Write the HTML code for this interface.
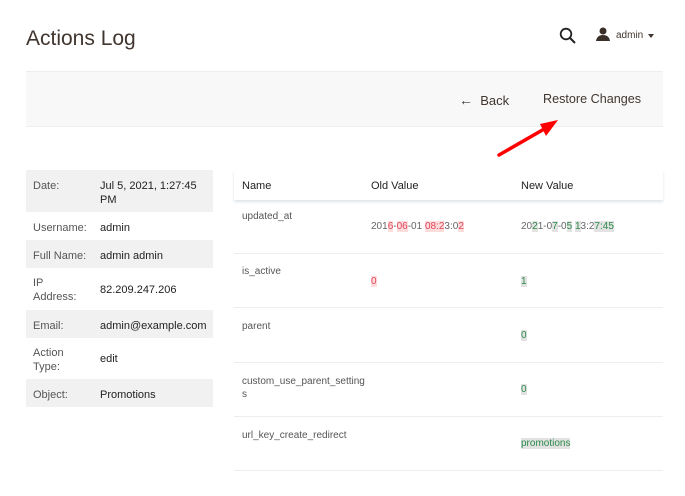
<!DOCTYPE html>
<html><head><style>
body{margin:0;width:685px;height:496px;background:#fff;font-family:"Liberation Sans",sans-serif;color:#303030;position:relative;overflow:hidden}
.a{position:absolute;white-space:nowrap}
.t{font-size:21px;color:#41362f;left:26px;top:27px}
.bar{left:26px;top:71px;width:637px;height:56px;background:#f8f8f8;border-top:1px solid #eee;border-bottom:1px solid #eee;box-sizing:border-box}
.btn{font-size:13px;color:#41362f}
.lr{position:absolute;left:26px;width:187px;font-size:11px}
.g{background:#f1f1f1}
.lr .l{position:absolute;left:7px;color:#555;line-height:14px}
.lr .v{position:absolute;left:74px;color:#222;line-height:14px}
.th{left:234px;top:170px;width:429px;height:30px;box-shadow:0 2px 3px #dde5ea;font-size:11px;color:#222}
.cell{font-size:10px;color:#555}
.sep{position:absolute;left:234px;width:429px;height:1px;background:#eee}
.r{background:#fdd;color:#e0445a}
.n{background:#e2e2e2;color:#2a8a4a}
.o{color:#666}
</style></head><body>
<div class="a t">Actions Log</div>
<svg class="a" style="left:559px;top:27px" width="18" height="18" viewBox="0 0 18 18"><circle cx="7" cy="7" r="5.3" fill="none" stroke="#222" stroke-width="1.8"/><line x1="11" y1="11" x2="16" y2="16" stroke="#222" stroke-width="2"/></svg>
<svg class="a" style="left:596px;top:27px" width="14" height="14" viewBox="0 0 14 14"><circle cx="7" cy="4" r="3.5" fill="#3a2e28"/><path d="M0 14 Q1 8 7 8 Q13 8 14 14Z" fill="#3a2e28"/></svg>
<div class="a" style="left:616px;top:30px;font-size:10px;color:#41362f">admin</div>
<div class="a" style="left:648px;top:34px;border-left:3px solid transparent;border-right:3px solid transparent;border-top:4px solid #41362f"></div>
<div class="a bar"></div>
<div class="a btn" style="left:459px;top:92px"><span style="font-size:14px">&#8592;</span>&nbsp;&nbsp;Back</div>
<div class="a btn" style="left:543px;top:92px;font-size:12.6px">Restore Changes</div>
<svg class="a" style="left:490px;top:112px" width="80" height="50"><line x1="9" y1="43" x2="56" y2="16" stroke="#f00" stroke-width="3.5" stroke-linecap="round"/><polygon points="68,8 50,12 56,24" fill="#f00"/></svg>

<div class="lr g" style="top:170px;height:42px"><span class="l" style="top:9px">Date:</span><span class="v" style="top:9px">Jul 5, 2021, 1:27:45<br>PM</span></div>
<div class="lr" style="top:212px;height:28px"><span class="l" style="top:9px">Username:</span><span class="v" style="top:9px">admin</span></div>
<div class="lr g" style="top:240px;height:28px"><span class="l" style="top:9px">Full Name:</span><span class="v" style="top:9px">admin admin</span></div>
<div class="lr" style="top:268px;height:42px"><span class="l" style="top:8px">IP<br>Address:</span><span class="v" style="top:15px">82.209.247.206</span></div>
<div class="lr g" style="top:310px;height:28px"><span class="l" style="top:9px">Email:</span><span class="v" style="top:9px">admin@example.com</span></div>
<div class="lr" style="top:338px;height:41px"><span class="l" style="top:8px">Action<br>Type:</span><span class="v" style="top:14px">edit</span></div>
<div class="lr g" style="top:379px;height:28px"><span class="l" style="top:9px">Object:</span><span class="v" style="top:9px">Promotions</span></div>

<div class="a th"><span class="a" style="left:8px;top:10px">Name</span><span class="a" style="left:137px;top:10px">Old Value</span><span class="a" style="left:287px;top:10px">New Value</span></div>

<div class="a cell" style="left:242px;top:211px">updated_at</div>
<div class="a cell o" style="left:371px;top:221px">201<span class="r">6</span>-<span class="r">06</span>-01 <span class="r">08:2</span>3:0<span class="r">2</span></div>
<div class="a cell o" style="left:521px;top:221px">20<span class="n">2</span>1-0<span class="n">7</span>-0<span class="n">5</span> <span class="n">1</span>3:2<span class="n">7:45</span></div>
<div class="sep" style="top:253px"></div>
<div class="a cell" style="left:242px;top:266px">is_active</div>
<div class="a cell" style="left:371px;top:276px"><span class="r">0</span></div>
<div class="a cell" style="left:521px;top:276px"><span class="n">1</span></div>
<div class="sep" style="top:307px"></div>
<div class="a cell" style="left:242px;top:321px">parent</div>
<div class="a cell" style="left:521px;top:330px"><span class="n">0</span></div>
<div class="sep" style="top:362px"></div>
<div class="a cell" style="left:242px;top:375px;line-height:13px">custom_use_parent_setting<br>s</div>
<div class="a cell" style="left:521px;top:384px"><span class="n">0</span></div>
<div class="sep" style="top:416px"></div>
<div class="a cell" style="left:242px;top:430px">url_key_create_redirect</div>
<div class="a cell" style="left:521px;top:438px"><span class="n">promotions</span></div>
<div class="sep" style="top:470px"></div>
</body></html>
